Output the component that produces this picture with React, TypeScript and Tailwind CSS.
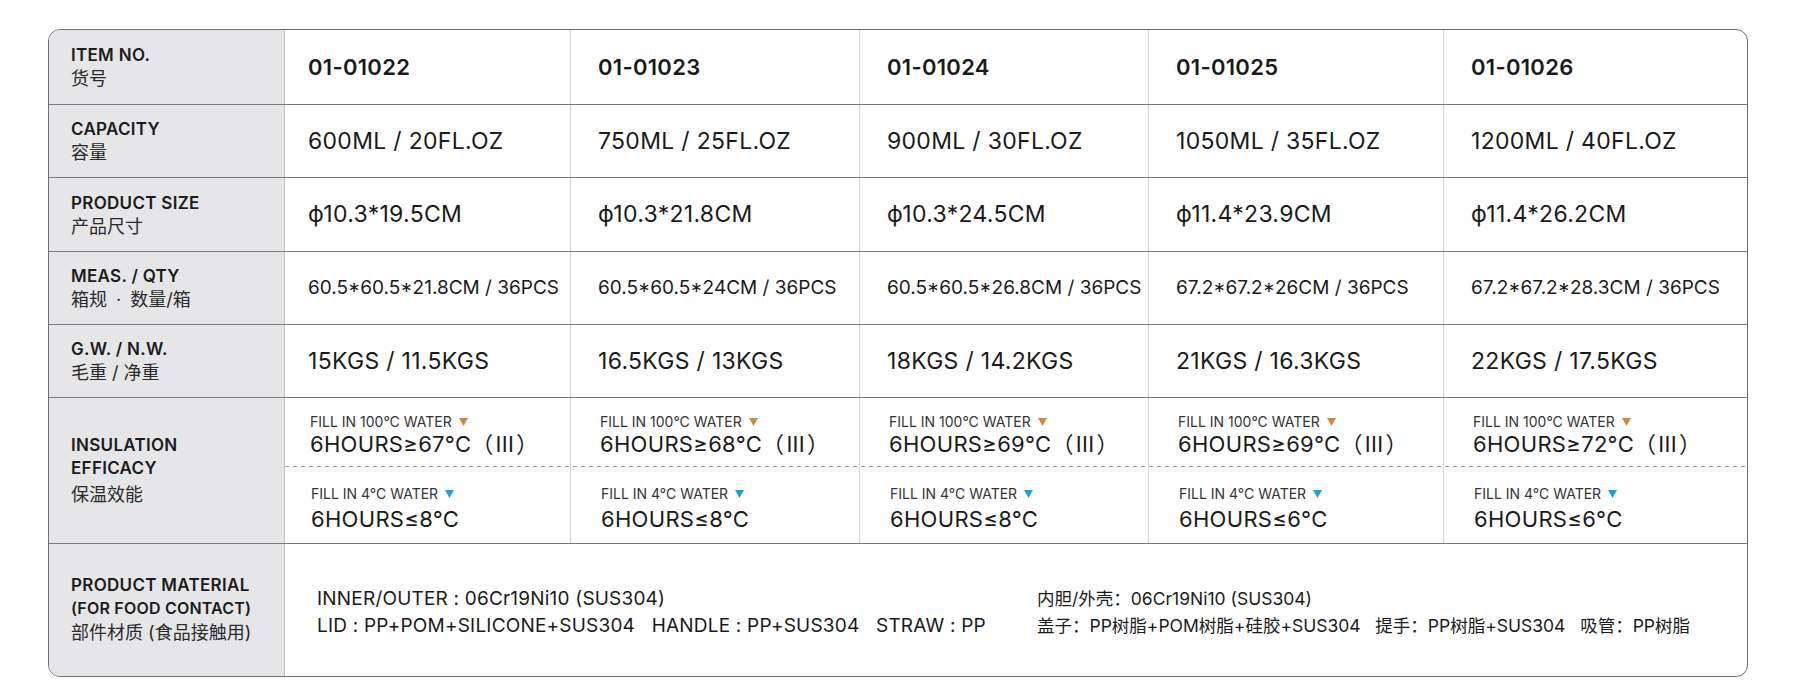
const font = { fontFamily: "Inter, 'Noto Sans CJK SC', sans-serif" }

const items = ["01-01022", "01-01023", "01-01024", "01-01025", "01-01026"]

const rows = [
  {
    en: "CAPACITY",
    cn: "容量",
    h: "h-[73px]",
    size: "text-[23px] tracking-[0.3px]",
    values: ["600ML / 20FL.OZ", "750ML / 25FL.OZ", "900ML / 30FL.OZ", "1050ML / 35FL.OZ", "1200ML / 40FL.OZ"],
  },
  {
    en: "PRODUCT SIZE",
    cn: "产品尺寸",
    h: "h-[74px]",
    size: "text-[23px] tracking-[0.3px]",
    values: ["ϕ10.3*19.5CM", "ϕ10.3*21.8CM", "ϕ10.3*24.5CM", "ϕ11.4*23.9CM", "ϕ11.4*26.2CM"],
  },
  {
    en: "MEAS. / QTY",
    cn: "箱规 · 数量/箱",
    h: "h-[73px]",
    size: "text-[19px]",
    values: [
      "60.5*60.5*21.8CM / 36PCS",
      "60.5*60.5*24CM / 36PCS",
      "60.5*60.5*26.8CM / 36PCS",
      "67.2*67.2*26CM / 36PCS",
      "67.2*67.2*28.3CM / 36PCS",
    ],
  },
  {
    en: "G.W. / N.W.",
    cn: "毛重 / 净重",
    h: "h-[73px]",
    size: "text-[23px] tracking-[0.3px]",
    values: ["15KGS / 11.5KGS", "16.5KGS / 13KGS", "18KGS / 14.2KGS", "21KGS / 16.3KGS", "22KGS / 17.5KGS"],
  },
]

const hot = ["67", "68", "69", "69", "72"]
const cold = ["8", "8", "8", "6", "6"]

const grid = "grid grid-cols-[236px_286px_289px_289px_295px_303px]"
const dataGrid = "grid grid-cols-[286px_289px_289px_295px_303px]"

function Label({ en, cn }: { en: string; cn: React.ReactNode }) {
  return (
    <div className="flex flex-col justify-center border-r border-[#c4c4c6] bg-[#e6e6e8] pl-[22px] text-[#1c1c1c]">
      <div className="text-[17px] font-semibold leading-[24px] tracking-[0.3px]">{en}</div>
      <div className="text-[18px] leading-[24px] text-[#2a2a2a]">{cn}</div>
    </div>
  )
}

function Cell({ i, children, className = "" }: { i: number; children: React.ReactNode; className?: string }) {
  return (
    <div
      className={`flex items-center ${i === 0 ? "pl-[23px]" : "pl-[27px]"} ${
        i < 4 ? "border-r border-[#d2d2d2]" : ""
      } ${className}`}
    >
      {children}
    </div>
  )
}

function Tri({ color }: { color: "hot" | "cold" }) {
  return (
    <svg width="9" height="8" viewBox="0 0 9 8" className="ml-[7px] inline-block">
      <path d="M0 0 H9 L4.5 8 Z" fill={color === "hot" ? "#d4873a" : "#1ea0e6"} />
    </svg>
  )
}

export default function App() {
  return (
    <div className="min-h-screen bg-white pl-[48px] pt-[29px] text-[#1a1a1a]" style={font}>
      <div className="w-[1700px] overflow-hidden rounded-[12px] border border-[#6f6f6f]">
        {/* item numbers */}
        <div className={`${grid} h-[75px] border-b border-[#7a7a7a]`}>
          <Label en="ITEM NO." cn="货号" />
          {items.map((v, i) => (
            <Cell key={v} i={i} className="text-[22px] font-semibold tracking-[0.3px]">
              {v}
            </Cell>
          ))}
        </div>

        {rows.map((r) => (
          <div key={r.en} className={`${grid} ${r.h} border-b border-[#7a7a7a]`}>
            <Label
              en={r.en}
              cn={
                r.en === "MEAS. / QTY" ? (
                  <>
                    箱规<span className="mx-[9px]">·</span>数量/箱
                  </>
                ) : (
                  r.cn
                )
              }
            />
            {r.values.map((v, i) => (
              <Cell key={i} i={i} className={r.size}>
                {v}
              </Cell>
            ))}
          </div>
        ))}

        {/* insulation */}
        <div className="grid h-[146px] grid-cols-[236px_1462px] border-b border-[#7a7a7a]">
          <div className="flex flex-col justify-center border-r border-[#c4c4c6] bg-[#e6e6e8] pl-[22px] pt-[2px] text-[#1c1c1c]">
            <div className="text-[17px] font-semibold leading-[23px] tracking-[0.3px]">INSULATION</div>
            <div className="text-[17px] font-semibold leading-[23px] tracking-[0.3px]">EFFICACY</div>
            <div className="text-[18px] leading-[30px] text-[#2a2a2a]">保温效能</div>
          </div>
          <div className="flex flex-col">
            <div className={`${dataGrid} h-[68px]`}>
              {hot.map((t, i) => (
                <div
                  key={i}
                  className={`flex flex-col pt-[16px] ${i === 0 ? "pl-[25px]" : "pl-[29px]"} ${
                    i < 4 ? "border-r border-[#d2d2d2]" : ""
                  }`}
                >
                  <div className="flex items-center text-[14px] leading-[16px] text-[#333]">
                    FILL IN 100°C WATER
                    <Tri color="hot" />
                  </div>
                  <div className="mt-[1px] text-[22px] leading-[27px] tracking-[0.3px]">
                    6HOURS≥{t}°C（<span className="mx-[2px]">III</span>）
                  </div>
                </div>
              ))}
            </div>
            <div className="h-px bg-[linear-gradient(to_right,#9c9c9c_55%,transparent_55%)] bg-[length:8px_1px] bg-repeat-x" />
            <div className={`${dataGrid} flex-1`}>
              {cold.map((t, i) => (
                <div
                  key={i}
                  className={`flex flex-col pt-[19px] ${i === 0 ? "pl-[26px]" : "pl-[30px]"} ${
                    i < 4 ? "border-r border-[#d2d2d2]" : ""
                  }`}
                >
                  <div className="flex items-center text-[14px] leading-[16px] text-[#333]">
                    FILL IN 4°C WATER
                    <Tri color="cold" />
                  </div>
                  <div className="mt-[4px] text-[22px] leading-[27px] tracking-[0.3px]">6HOURS≤{t}°C</div>
                </div>
              ))}
            </div>
          </div>
        </div>

        {/* material */}
        <div className="grid h-[132px] grid-cols-[236px_1462px]">
          <div className="flex flex-col justify-center border-r border-[#c4c4c6] bg-[#e6e6e8] pl-[22px] text-[#1c1c1c]">
            <div className="text-[17px] font-semibold leading-[24px] tracking-[0.3px]">PRODUCT MATERIAL</div>
            <div className="text-[16px] font-semibold leading-[22px] tracking-[0.2px]">(FOR FOOD CONTACT)</div>
            <div className="text-[18px] leading-[28px] text-[#2a2a2a]">部件材质 (食品接触用)</div>
          </div>
          <div className="flex items-center pl-[32px] pt-[4px]">
            <div className="w-[720px] text-[19px] leading-[27px] tracking-[0.2px]">
              <div>INNER/OUTER : 06Cr19Ni10 (SUS304)</div>
              <div className="whitespace-pre">LID : PP+POM+SILICONE+SUS304   HANDLE : PP+SUS304   STRAW : PP</div>
            </div>
            <div className="text-[17.5px] leading-[27px]">
              <div>内胆/外壳：06Cr19Ni10 (SUS304)</div>
              <div className="whitespace-pre">盖子：PP树脂+POM树脂+硅胶+SUS304   提手：PP树脂+SUS304   吸管：PP树脂</div>
            </div>
          </div>
        </div>
      </div>
    </div>
  )
}
